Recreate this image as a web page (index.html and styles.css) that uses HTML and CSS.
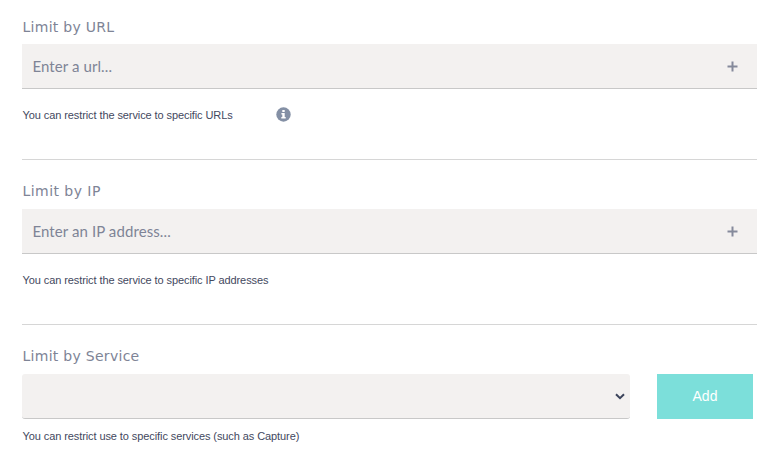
FILE: index.html
```html
<!DOCTYPE html>
<html lang="en">
<head>
<meta charset="utf-8">
<title>Service limits</title>
<link rel="stylesheet" href="styles.css">
</head>
<body>
<main class="limits">
  <section class="group">
    <h2 class="label">Limit by URL</h2>
    <div class="field"><span class="hint">Enter a url...</span><svg class="plus" viewBox="0 0 11 11"><path d="M5.5 0.5V10.5M0.5 5.5H10.5"/></svg></div>
    <p class="help"><span>You can restrict the service to specific URLs</span>
      <svg class="info" viewBox="0 0 15 15"><circle cx="7.5" cy="7.5" r="7.2"/><path d="M6.3 3h2.4v2H6.3zM5.4 6h3.3v4h1v1.5H5.3V10h1V7.4h-.9z"/></svg></p>
  </section>
  <section class="group">
    <h2 class="label label-wide">Limit by IP</h2>
    <div class="field"><span class="hint">Enter an IP address...</span><svg class="plus" viewBox="0 0 11 11"><path d="M5.5 0.5V10.5M0.5 5.5H10.5"/></svg></div>
    <p class="help"><span>You can restrict the service to specific IP addresses</span></p>
  </section>
  <section class="group group-last">
    <h2 class="label">Limit by Service</h2>
    <div class="row">
      <div class="field select"><svg class="chevron" viewBox="0 0 10 7"><path d="M1 1.2L5 5.2L9 1.2"/></svg></div>
      <button class="add" type="button">Add</button>
    </div>
    <p class="help help-close"><span>You can restrict use to specific services (such as Capture)</span></p>
  </section>
</main>
</body>
</html>
```
FILE: styles.css
```css
* { box-sizing: border-box; }
body {
  margin: 0;
  background: #fff;
  color: #43485e;
  font-family: "Liberation Sans", Arial, sans-serif;
}
.limits { padding: 0 8px 0 22px; }
.group {
  height: 165px;
  padding-top: 19px;
  border-bottom: 1px solid #d6d6d6;
}
.group:first-child { height: 160px; padding-top: 14px; }
.group-last { height: 131px; border-bottom: 0; }
.label {
  margin: 0;
  padding-left: 0.5px;
  height: 30px;
  font: 400 14px/24px "DejaVu Sans", Verdana, sans-serif;
  letter-spacing: 0.28px;
  color: #7e8496;
}
.group:first-child .label { line-height: 26px; }
.label-wide { letter-spacing: 0.45px; }
.field {
  display: flex;
  align-items: center;
  justify-content: space-between;
  height: 45px;
  padding: 0 19px 0 10px;
  background: #f3f1f0;
  border-bottom: 1px solid #c8c8c8;
}
.hint {
  padding-left: 0.4px;
  font: 400 15px/20px Lato, sans-serif;
  letter-spacing: 0.1px;
  color: #7e8496;
}
.plus { width: 11px; height: 11px; margin-top: 1px; fill: none; stroke: #858a9b; stroke-width: 2; }
.help {
  display: flex;
  align-items: center;
  margin: 16px 0 0;
  padding-left: 0.5px;
  height: 20px;
  font-size: 11px;
  letter-spacing: -0.09px;
  white-space: nowrap;
}
.help-close { margin-top: 7px; }
.info { width: 15px; height: 15px; margin: -2px 0 0 43.5px; }
.info circle { fill: #8490a5; }
.info path { fill: #fff; }
.row { display: flex; gap: 27px; }
.select { width: 608px; padding: 0 5px; justify-content: flex-end; border-radius: 3px; }
.chevron { width: 10px; height: 7px; fill: none; stroke: #3b435b; stroke-width: 2; }
.add {
  width: 96px;
  height: 45px;
  border: 0;
  padding: 0 0 2px;
  background: #7cdfda;
  color: #fff;
  font: 400 14px "Liberation Sans", Arial, sans-serif;
}
```
